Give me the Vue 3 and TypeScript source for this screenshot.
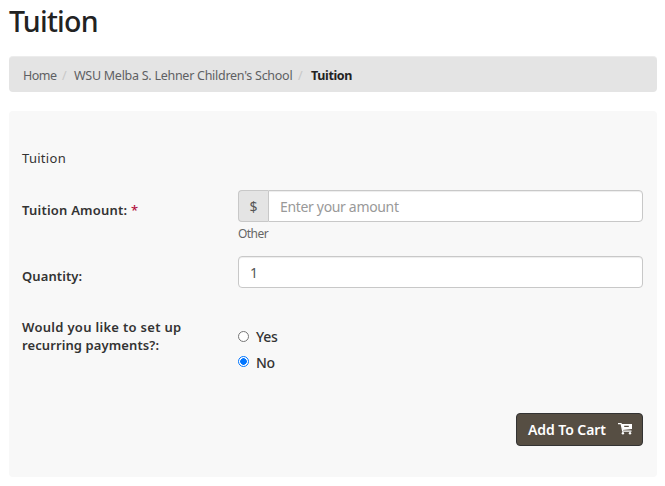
<script setup lang="ts">
import { ref } from 'vue'

interface Crumb {
  label: string
  kind: string
}

const crumbs: Crumb[] = [
  { label: 'Home', kind: 'home' },
  { label: "WSU Melba S. Lehner Children's School", kind: 'school' },
]
const amount = ref('')
const quantity = ref('1')
const recurring = ref('No')
const options = ['Yes', 'No']
</script>

<template>
  <main class="page">
    <h1 class="title"><span>Tuition</span></h1>
    <nav class="breadcrumb">
      <template v-for="crumb in crumbs" :key="crumb.label">
        <a class="crumb" :class="crumb.kind">{{ crumb.label }}</a>
        <span class="slash">/</span>
      </template>
      <strong class="current">Tuition</strong>
    </nav>
    <form class="panel" @submit.prevent>
      <p class="intro">Tuition</p>
      <div class="row amount-row">
        <label class="label" for="amount">Tuition Amount: <span class="required">*</span></label>
        <div class="field">
          <div class="group">
            <span class="addon">$</span>
            <input id="amount" v-model="amount" class="input joined" type="text" placeholder="Enter your amount" />
          </div>
          <div class="help">Other</div>
        </div>
      </div>
      <div class="row quantity-row">
        <label class="label quantity-label" for="quantity">Quantity:</label>
        <div class="field">
          <input id="quantity" v-model="quantity" class="input" type="text" />
        </div>
      </div>
      <div class="row recurring-row">
        <div class="label question">Would you like to set up<br /><span class="second-line">recurring payments?:</span></div>
        <div class="field options">
          <label v-for="option in options" :key="option" class="option">
            <span class="radio" :class="{ checked: recurring === option }"></span>
            <input v-model="recurring" class="native" type="radio" name="recurring" :value="option" />
            <span class="option-text">{{ option }}</span>
          </label>
        </div>
      </div>
      <div class="actions">
        <button class="button" type="submit">
          <span class="button-text">Add To Cart</span>
          <svg class="cart" viewBox="0 0 15 12" width="15" height="12" aria-hidden="true">
            <path d="M0 .6h3.1l1.6 7.6h8.8" fill="none" stroke="#fff" stroke-width="1.2" />
            <path fill="#fff" fill-rule="evenodd" d="M3.4 1H14V6L4.6 7ZM6.2 2.8v1.2h4.6V2.8Z" />
            <circle cx="4.9" cy="10.3" r="1.2" fill="#fff" />
            <circle cx="12" cy="10.3" r="1.2" fill="#fff" />
          </svg>
        </button>
      </div>
    </form>
  </main>
</template>

<style>
body {
  margin: 0;
  background: #fff;
}
</style>

<style scoped>
.page {
  box-sizing: border-box;
  height: 486px;
  padding: 0 8px 0 9px;
  overflow: hidden;
  font-family: 'Noto Sans', 'Open Sans', sans-serif;
  font-size: 14px;
  color: #333;
}
.title {
  height: 56px;
  margin: 0;
  font-size: 28.5px;
  font-weight: 500;
  line-height: 43px;
  letter-spacing: -0.75px;
  color: #222;
}
.breadcrumb {
  display: flex;
  box-sizing: border-box;
  height: 36px;
  padding: 1px 14px 0;
  border-radius: 4px;
  border-top: 1px solid #ececec;
  background: #e4e4e4;
  font-size: 12.5px;
  line-height: 35px;
  white-space: nowrap;
}
.crumb {
  color: #5e6063;
}
.home {
  width: 34px;
  letter-spacing: -0.5px;
}
.school {
  width: 219px;
  letter-spacing: -0.27px;
}
.slash {
  width: 17px;
  padding-left: 5px;
  box-sizing: border-box;
  color: #c8c8c8;
}
.current {
  margin-left: 1px;
  letter-spacing: -0.35px;
  color: #222;
}
.panel {
  box-sizing: border-box;
  height: 366px;
  margin-top: 19px;
  padding: 38px 14px 0 13px;
  border-radius: 4px;
  background: #f8f8f8;
}
.intro {
  height: 41px;
  margin: 0;
  font-size: 13px;
  line-height: 19px;
  letter-spacing: 0.3px;
}
.row {
  display: flex;
}
.amount-row {
  height: 66px;
}
.quantity-row {
  height: 62px;
}
.recurring-row {
  height: 95px;
}
.label {
  flex: none;
  width: 216px;
  padding-top: 11px;
  font-size: 13px;
  font-weight: 600;
  line-height: 18px;
  letter-spacing: 0.22px;
  white-space: nowrap;
}
.quantity-label {
  letter-spacing: 0.1px;
}
.required {
  font-weight: 500;
  color: #b3123f;
}
.question {
  padding-top: 0;
  letter-spacing: 0.3px;
}
.second-line {
  letter-spacing: 0.1px;
}
.field {
  flex: 1;
}
.group {
  display: flex;
}
.input {
  display: block;
  box-sizing: border-box;
  width: 100%;
  height: 32px;
  padding: 1px 11px 0;
  border: 1px solid #c8c8c8;
  border-radius: 4px;
  outline: none;
  background: #fff;
  box-shadow: inset 0 1px 1px rgba(0, 0, 0, 0.075);
  font: 14px 'Noto Sans', sans-serif;
  color: #555;
}
.input::placeholder {
  letter-spacing: -0.33px;
  color: #999;
  opacity: 1;
}
.joined {
  flex: 1;
  width: auto;
  border-radius: 0 4px 4px 0;
}
.addon {
  box-sizing: border-box;
  width: 30px;
  height: 32px;
  border: 1px solid #c8c8c8;
  border-right: 0;
  border-radius: 4px 0 0 4px;
  background: #e4e4e4;
  line-height: 32px;
  text-align: center;
  color: #555;
}
.help {
  padding-top: 3px;
  font-size: 12px;
  line-height: 18px;
  letter-spacing: -0.55px;
  color: #666;
}
.options {
  padding-top: 6px;
}
.option {
  position: relative;
  display: flex;
  align-items: flex-start;
  height: 26px;
}
.radio {
  box-sizing: border-box;
  width: 11px;
  height: 11px;
  margin-top: 7px;
  border: 1px solid #767676;
  border-radius: 50%;
  background: #fff;
}
.option:last-child .radio {
  margin-top: 6px;
}
.radio.checked {
  border-color: #0075ff;
  background: radial-gradient(circle, #0075ff 3px, #fff 3.6px);
}
.native {
  position: absolute;
  margin: 0;
  opacity: 0;
}
.option-text {
  margin-left: 7px;
  font-weight: 500;
  line-height: 26px;
  letter-spacing: -0.3px;
}
.actions {
  display: flex;
  justify-content: flex-end;
}
.button {
  display: flex;
  box-sizing: border-box;
  width: 127px;
  height: 33px;
  padding: 0 11px;
  border: 1px solid #333;
  border-radius: 4px;
  background: #564e43;
  font: 600 14px 'Noto Sans', sans-serif;
  color: #fff;
  white-space: nowrap;
}
.button-text {
  flex: none;
  width: 90px;
  line-height: 32px;
  text-align: left;
  letter-spacing: -0.08px;
}
.cart {
  flex: none;
  margin-top: 9px;
}
</style>
